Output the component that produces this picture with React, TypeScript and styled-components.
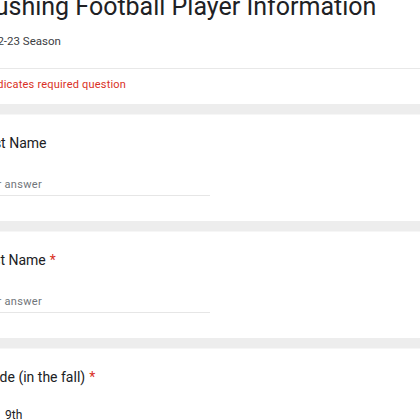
import React from "react";
import styled, { createGlobalStyle } from "styled-components";

const GlobalStyle = createGlobalStyle`
  html, body {
    margin: 0;
    padding: 0;
    background: #ffffff;
  }
  body {
    font-family: Roboto, "Liberation Sans", Arial, sans-serif;
    color: #202124;
  }
`;

const Viewport = styled.div`
  width: 420px;
  height: 420px;
  overflow: hidden;
  background: #ffffff;
`;

const Column = styled.div`
  width: 480px;
  margin-left: -22px;
  margin-top: -8px;
  display: flex;
  flex-direction: column;
`;

const HeaderCard = styled.div`
  background: #ffffff;
  display: flex;
  flex-direction: column;
`;

const TitleBlock = styled.div`
  padding-bottom: 19px;
  border-bottom: 1px solid #e8e8e8;
`;

const Title = styled.h1`
  margin: 0 0 0 -8px;
  font-family: Roboto, "Open Sans", sans-serif;
  font-size: 25px;
  font-weight: 400;
  line-height: 30px;
  color: #202124;
  white-space: nowrap;
`;

const Subtitle = styled.p`
  margin: 11px 0 0;
  font-size: 11.5px;
  line-height: 16px;
  color: #3c4043;
`;

const Notice = styled.p`
  margin: 0 0 0 2px;
  padding: 8px 0 11px;
  font-size: 11px;
  line-height: 16px;
  letter-spacing: 0.2px;
  color: #d93025;
`;

const Band = styled.div`
  height: 10px;
  background: #ededed;
  border-bottom: 1px solid #f6f6f6;
`;

const QuestionCard = styled.div`
  background: #ffffff;
  display: flex;
  flex-direction: column;
  padding-top: 19px;
  height: 106px;
  box-sizing: border-box;
`;

const Label = styled.div`
  font-size: 14px;
  line-height: 18px;
  color: #202124;
`;

const Required = styled.span`
  color: #d93025;
  margin-left: 4px;
`;

const AnswerField = styled.div`
  margin-top: 25px;
  width: 232px;
  padding-bottom: 2px;
  border-bottom: 1px solid #e6e6e6;
  font-size: 11px;
  line-height: 16px;
  letter-spacing: 0.3px;
  color: #70757a;
`;

const Option = styled.label`
  margin-top: 20px;
  display: flex;
  align-items: center;
  gap: 9px;
  font-size: 12px;
  line-height: 18px;
  color: #202124;
`;

const Radio = styled.span`
  flex: none;
  width: 18px;
  height: 18px;
  border-radius: 50%;
  border: 2px solid #5f6368;
  box-sizing: border-box;
`;

type Question = { label: string; required?: boolean };

const textQuestions: Question[] = [
  { label: "First Name" },
  { label: "Last Name", required: true },
];

const App: React.FC = () => {
  return (
    <Viewport>
      <GlobalStyle />
      <Column>
        <HeaderCard>
          <TitleBlock>
            <Title>Crushing Football Player Information</Title>
            <Subtitle>2022-23 Season</Subtitle>
          </TitleBlock>
          <Notice>* Indicates required question</Notice>
        </HeaderCard>
        {textQuestions.map((q) => (
          <React.Fragment key={q.label}>
            <Band />
            <QuestionCard>
              <Label>
                {q.label}
                {q.required && <Required>*</Required>}
              </Label>
              <AnswerField>Your answer</AnswerField>
            </QuestionCard>
          </React.Fragment>
        ))}
        <Band />
        <QuestionCard>
          <Label>
            Grade (in the fall)
            <Required>*</Required>
          </Label>
          <Option>
            <Radio />
            9th
          </Option>
        </QuestionCard>
      </Column>
    </Viewport>
  );
};

export default App;
